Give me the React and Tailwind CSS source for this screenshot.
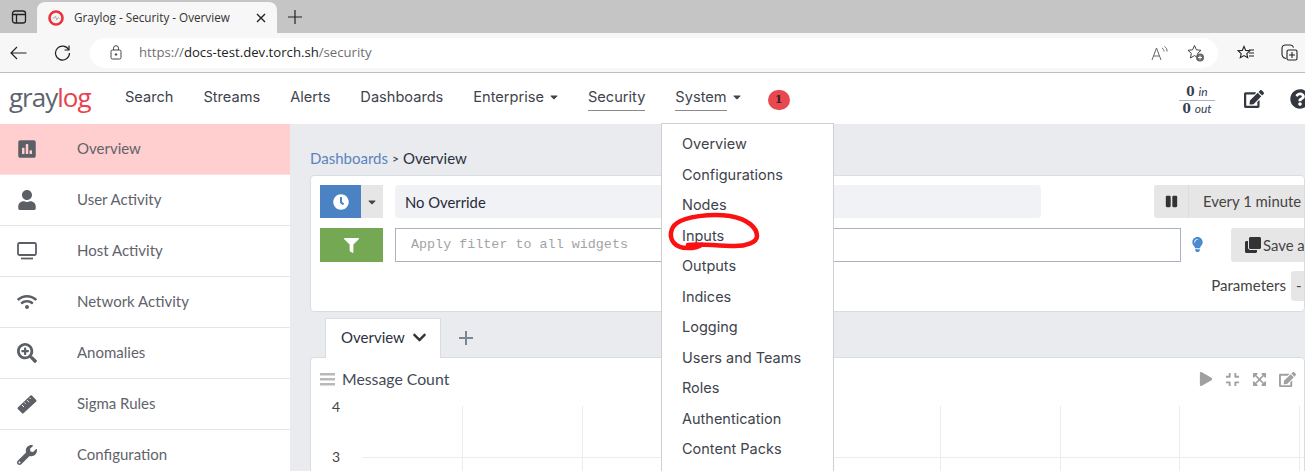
import {
  FaPoll, FaUser, FaWifi, FaSearchPlus, FaWrench, FaClock, FaFilter, FaPause,
  FaLightbulb, FaClone, FaEdit, FaQuestionCircle, FaPlay, FaCompress, FaExpandArrowsAlt,
  FaCaretDown, FaChevronDown,
} from 'react-icons/fa';

const sidebarItems = [
  { label: 'Overview', Icon: FaPoll, active: true },
  { label: 'User Activity', Icon: FaUser },
  { label: 'Host Activity', Icon: MonitorIcon },
  { label: 'Network Activity', Icon: FaWifi },
  { label: 'Anomalies', Icon: FaSearchPlus },
  { label: 'Sigma Rules', Icon: RulerIcon },
  { label: 'Configuration', Icon: FaWrench },
];

const systemMenu = [
  'Overview', 'Configurations', 'Nodes', 'Inputs', 'Outputs', 'Indices',
  'Logging', 'Users and Teams', 'Roles', 'Authentication', 'Content Packs',
];

function MonitorIcon({ className }) {
  return (
    <svg className={className} viewBox="0 0 20 20" fill="none" stroke="currentColor">
      <rect x="1" y="2" width="18" height="12" rx="1.5" strokeWidth="1.8" />
      <path d="M4 17.5h12" strokeWidth="1.8" />
    </svg>
  );
}

function RulerIcon({ className }) {
  return (
    <svg className={className} viewBox="0 0 20 20" fill="currentColor">
      <path d="M0.8 13.5L13.5 1.500a1 1 0 0 1 1.400 0l4.300 4.500a1 1 0 0 1 0 1.400L6.500 19.300a1 1 0 0 1-1.400 0L0.800 14.900a1 1 0 0 1 0-1.400z" />
      <path d="M5 11l2 2M7.500 8.600l1.200 1.200M10 6.200l2 2M12.500 3.800l1.200 1.200" stroke="#fff" strokeWidth="1" />
    </svg>
  );
}

function TabBar() {
  return (
    <div className="flex h-[33px] bg-[#c5c5c5] items-end">
      {/* window icon */}
      <div className="w-[37px] h-[33px] flex items-center justify-center">
        <svg width="16" height="16" viewBox="0 0 16 16" fill="none" stroke="#222" strokeWidth="1.3">
          <rect x="1.5" y="2" width="13" height="12" rx="2.5" />
          <path d="M1.5 5.5h13M5.5 5.5V14" />
        </svg>
      </div>
      <div className="w-[240px] h-[31px] bg-[#f7f7f7] rounded-t-lg flex items-center pl-[11px] pr-[10px]">
        <svg width="16" height="16" viewBox="0 0 16 16" className="shrink-0">
          <circle cx="8" cy="8" r="6.5" fill="#f3f3f3" stroke="#e8323c" strokeWidth="2.6" />
          <path d="M4.5 8h2l1-2 1.2 4 1-2h2" fill="none" stroke="#aaa" strokeWidth="0.9" />
        </svg>
        <span className="ml-[10px] text-[11.7px] text-[#333] font-['Open_Sans',sans-serif] whitespace-nowrap">
          Graylog - Security - Overview
        </span>
        <svg className="ml-auto mr-[1px]" width="10" height="10" viewBox="0 0 10 10" stroke="#222" strokeWidth="1.4">
          <path d="M1 1l8 8M9 1l-8 8" />
        </svg>
      </div>
      <div className="ml-[10px] h-[33px] flex items-center">
        <svg width="16" height="16" viewBox="0 0 16 16" stroke="#222" strokeWidth="1.2">
          <path d="M8 1v14M1 8h14" />
        </svg>
      </div>
    </div>
  );
}

function AddressBar() {
  return (
    <div className="flex items-center h-[40px] bg-[#f7f7f7] border-b border-[#bdbdbd]">
      <div className="w-[90px] flex items-center shrink-0">
        <svg className="ml-[10px]" width="17" height="14" viewBox="0 0 17 14" fill="none" stroke="#222" strokeWidth="1.2">
          <path d="M16.5 7H1M7 1L1 7l6 6" />
        </svg>
        <svg className="ml-[27px]" width="17" height="17" viewBox="0 0 17 17" fill="none" stroke="#222" strokeWidth="1.2">
          <path d="M14.8 6A7 7 0 1 0 15.5 9" />
          <path d="M15 1.5V6h-4.5" />
        </svg>
      </div>
      <div className="w-[1128px] h-[30px] bg-white rounded-full flex items-center pl-[20px] pr-[13px] shrink-0">
        <svg width="12" height="15" viewBox="0 0 12 15" fill="none" stroke="#444" strokeWidth="1">
          <rect x="1" y="5" width="10" height="9" rx="1.5" />
          <path d="M3.5 5V3.2a2.5 2.5 0 0 1 5 0V5" />
          <circle cx="6" cy="9.5" r="0.8" fill="#444" />
        </svg>
        <span className="ml-[17px] text-[13.16px] text-[#6f6f6f] font-['Open_Sans',sans-serif] whitespace-nowrap">
          https://<span className="text-[#222]">docs-test.dev.torch.sh</span>/security
        </span>
        {/* read aloud */}
        <svg className="ml-auto" width="18" height="16" viewBox="0 0 18 16" fill="none" stroke="#666" strokeWidth="1">
          <path d="M1 15L5.5 3 10 15M2.7 11h5.600" />
          <path d="M11 3c1.500.8 2 2 2 3.500M13.500 1.500c1.800 1.200 2.600 2.800 2.600 5" />
        </svg>
        <svg className="ml-[18px]" width="18" height="18" viewBox="0 0 18 18">
          <path d="M7.500 1.500l1.900 4.300 4.600.5-3.400 3.100 1 4.600-4.100-2.400-4.100 2.400 1-4.600L1 6.300l4.600-.5z" fill="none" stroke="#444" strokeWidth="1" />
          <circle cx="13" cy="13.500" r="4" fill="#666" />
          <path d="M13 11.500v4M11 13.500h4" stroke="#fff" strokeWidth="1" />
        </svg>
      </div>
      <svg className="ml-[19px]" width="18" height="16" viewBox="0 0 18 16" fill="none" stroke="#222" strokeWidth="1.1">
        <path d="M7 1.500l1.700 3.900 4.100.4-3 2.800.9 4.100L7 10.600l-3.700 2.100.9-4.100-3-2.800 4.100-.4z" />
        <path d="M12 5h5M12 8h5M12 11h5" />
      </svg>
      <svg className="ml-[26px]" width="17" height="17" viewBox="0 0 17 17" fill="none" stroke="#222" strokeWidth="1.1">
        <path d="M5 14.500C2.500 14 1 12.500 1 10V4.500C1 2.500 2.500 1 4.500 1h5C11 1 12 2 12.500 3.500" />
        <rect x="6" y="6" width="10" height="10" rx="1.500" />
        <path d="M11 8v6M8 11h6" />
      </svg>
    </div>
  );
}

function NavLink({ children, caret, underline }) {
  return (
    <div className="flex items-center h-[51px] relative">
      <span className={`text-[14.6px] text-[#3e434c] py-[3px] leading-[20px] mt-[-3px] ${underline ? 'border-b border-[#8a8a8a]' : ''}`}>
        {children}
      </span>
      {caret && <FaCaretDown className="ml-[4px] mr-[-2px] text-[#3e434c] text-[12px] mt-[-3px]" />}
    </div>
  );
}

function TopNav() {
  return (
    <div className="flex items-center h-[51px] bg-white font-['Inter',sans-serif]">
      <div className="w-[125px] pl-[9px] shrink-0 font-['Open_Sans',sans-serif] font-medium text-[26px] leading-[51px] tracking-[-1px] mt-[-3px]">
        <span className="text-[#5c6470]">gray</span>
        <span className="text-[#e8434c]">log</span>
      </div>
      <div className="flex gap-[30px]">
        <NavLink>Search</NavLink>
        <NavLink>Streams</NavLink>
        <NavLink>Alerts</NavLink>
        <NavLink>Dashboards</NavLink>
        <NavLink caret>Enterprise</NavLink>
        <NavLink underline>Security</NavLink>
        <NavLink caret underline>System</NavLink>
      </div>
      <span className="ml-[27px] w-[22px] h-[20px] mt-[3px] rounded-full bg-[#e8484f] text-[#3b2024] text-[11px] font-bold font-['DejaVu_Serif',serif] flex items-center justify-center">
        1
      </span>
      <div className="ml-auto flex items-center">
        <div className="w-[36px] text-[12px] leading-[14px] text-center text-[#38404f] font-['DejaVu_Serif',serif] mr-[29px] mt-[3px]">
          <div className="border-b border-[#a9b4c0] pb-[1px]"><b>0</b> <i className="font-['Lato',sans-serif]">in</i></div>
          <div className="pt-[1px]"><b>0</b> <i className="font-['Lato',sans-serif]">out</i></div>
        </div>
        <FaEdit className="text-[#33373f] text-[20px] mr-[26px] mt-[1px]" />
        <FaQuestionCircle className="text-[#33373f] text-[20px] mr-[-5px] mt-[1px]" />
      </div>
    </div>
  );
}

function Sidebar() {
  return (
    <div className="w-[290px] shrink-0 bg-white font-['Lato',sans-serif]">
      {sidebarItems.map(({ label, Icon, active }) => (
        <div
          key={label}
          className={`h-[51px] flex items-center border-b pb-[1px] ${active ? 'bg-[#ffcfd0] border-[#f3e3e3]' : 'bg-white border-[#e4e4e4]'}`}
        >
          <span className="w-[77px] pl-[17px] shrink-0">
            <Icon className="w-[20px] h-[20px] text-[#5d5f66]" />
          </span>
          <span className="text-[15px] text-[#5f636b]">{label}</span>
        </div>
      ))}
    </div>
  );
}

function Toolbar() {
  return (
    <div className="h-[137px] bg-white rounded-[4px] border border-[#d8dde4] pl-[9px] pt-[9px] overflow-hidden">
      <div className="flex h-[33px]">
        <div className="w-[41px] shrink-0 bg-[#4a82c3] flex items-center justify-center">
          <FaClock className="text-white text-[16px]" />
        </div>
        <div className="w-[22px] shrink-0 bg-[#e6e6e6] flex items-center justify-center">
          <FaCaretDown className="text-[#444] text-[12px]" />
        </div>
        <div className="ml-[12px] w-[646px] shrink-0 bg-[#f1f2f5] rounded-[4px] flex items-center pl-[10px] pt-[1px] text-[14.8px] text-[#252a3a]">
          No Override
        </div>
        <div className="ml-[113px] flex w-[200px] shrink-0 bg-[#e6e6e6] rounded-l-[3px]">
          <div className="w-[35px] flex items-center justify-center border-r border-[#dddddd] shrink-0">
            <FaPause className="text-[#333] text-[13px]" />
          </div>
          <div className="pl-[14px] flex items-center text-[14.9px] text-[#444] whitespace-nowrap">Every 1 minute</div>
        </div>
      </div>
      <div className="flex h-[34px] mt-[10px]">
        <div className="w-[63px] shrink-0 bg-[#74a852] flex items-center justify-center">
          <FaFilter className="text-white text-[15px]" />
        </div>
        <div className="ml-[12px] w-[786px] shrink-0 border border-[#aab4c0] flex items-center pl-[15px] text-[13.4px] text-[#a3a3a3] font-['Liberation_Mono',monospace]">
          Apply filter to all widgets
        </div>
        <FaLightbulb className="ml-[9px] mt-[9px] text-[#4a8ad0] text-[15px] shrink-0" />
        <div className="ml-[26px] w-[101px] shrink-0 bg-[#e6e6e6] rounded-l-[3px] flex items-center pl-[14px] text-[14.9px] text-[#444] whitespace-nowrap">
          <FaClone className="text-[#333] text-[16px] mr-[2px] shrink-0" />
          Save a
        </div>
      </div>
      <div className="flex justify-end items-center mt-[7px] h-[33px] text-[15.1px] text-[#444]">
        Parameters
        <span className="ml-[5px] w-[13px] h-[30px] bg-[#e6e6e6] rounded-l-[3px] text-[#444] flex items-center pl-[5px]">-</span>
      </div>
    </div>
  );
}

function Widget() {
  const columns = [0, 1, 2, 3, 4, 5, 6, 7];
  return (
    <div className="bg-white rounded-t-[4px] border border-[#d8dde4] h-[130px] pt-[11px] overflow-hidden">
      <div className="flex items-center h-[20px] pl-[9px]">
        <svg width="15" height="13" viewBox="0 0 15 13" fill="#b9b9b9" className="shrink-0">
          <rect y="0" width="15" height="2.500" />
          <rect y="5" width="15" height="2.500" />
          <rect y="10" width="15" height="2.500" />
        </svg>
        <span className="ml-[7px] pb-[1px] text-[15.8px] text-[#444a55]">Message Count</span>
        <div className="ml-auto flex items-center gap-[12px] pr-[8px] text-[#a0a0a0]">
          <FaPlay className="text-[14px]" />
          <FaCompress className="text-[15px]" />
          <FaExpandArrowsAlt className="text-[15px]" />
          <FaEdit className="text-[17px]" />
        </div>
      </div>
      {/* chart */}
      <div className="flex mt-[17px]">
        <div className="w-[34px] ml-[17px] text-[14px] leading-[18px] text-[#444] flex flex-col gap-[32px] mt-[-8px] shrink-0">
          <span className="pl-[4px]">4</span>
          <span className="pl-[4px]">3</span>
        </div>
        <div className="flex-1 h-[80px] relative">
          <div className="flex h-full pl-[100px]">
            {columns.map((c) => (
              <div key={c} className="w-[119.500px] shrink-0 border-l border-[#ececec]" />
            ))}
          </div>
          <div className="absolute left-0 right-0 top-[51px] border-t border-[#ececec]" />
        </div>
      </div>
    </div>
  );
}

function Main() {
  return (
    <div className="flex-1 min-w-0 bg-[#e9ebef] pl-[20px] font-['Lato',sans-serif] overflow-hidden">
      <div className="h-[51px] flex items-center pt-[18px] text-[15px] text-[#2b3040]">
        <span className="text-[#5a83c0]">Dashboards</span>
        <span className="mx-[4px] text-[12px]">&gt;</span>
        <span>Overview</span>
      </div>
      <Toolbar />
      <div className="flex items-center h-[40px] mt-[6px] pl-[15px] relative z-10 mb-[-1px]">
        <div className="w-[116px] h-[40px] bg-white border border-[#d8dde4] border-b-0 flex items-center pl-[15px] pb-[2px] text-[15px] text-[#2b3040]">
          Overview
          <FaChevronDown className="ml-[7px] text-[15px] text-[#333]" />
        </div>
        <svg className="ml-[18px]" width="14" height="14" viewBox="0 0 14 14" stroke="#7b8594" strokeWidth="2">
          <path d="M7 0v14M0 7h14" />
        </svg>
      </div>
      <Widget />
    </div>
  );
}

export default function App() {
  return (
    <div className="w-[1305px] h-[471px] overflow-hidden relative bg-white">
      <TabBar />
      <AddressBar />
      <TopNav />
      <div className="flex">
        <Sidebar />
        <Main />
      </div>

      {/* System dropdown */}
      <div className="absolute left-[661px] top-[123px] w-[173px] h-[360px] bg-white border border-[#cfcfcf] pt-[5px] font-['Inter',sans-serif] z-20">
        {systemMenu.map((item) => (
          <div key={item} className="h-[30.500px] pl-[20px] flex items-center text-[14.500px] text-[#3e434c] whitespace-nowrap">
            {item}
          </div>
        ))}
      </div>

      {/* hand drawn annotation */}
      <svg className="absolute left-[665px] top-[210px] z-30" width="100" height="50" viewBox="665 210 100 50" fill="none" stroke="#fb1111" strokeWidth="4.500" strokeLinecap="round">
        <path d="M688 245C700 243 715 246 735 246C745 246 757 243 757 236C757 228 748 219 730 216C710 213 685 217 677 223C670 228 669 237 674 243C680 250 695 249 702 244.500" />
      </svg>
    </div>
  );
}
